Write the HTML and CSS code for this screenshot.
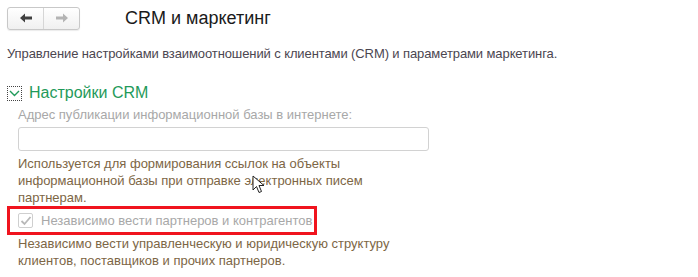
FILE: index.html
```html
<!DOCTYPE html>
<html lang="ru">
<head>
    <meta charset="UTF-8">
    <title>CRM и маркетинг</title>
    <link rel="stylesheet" href="styles.css">
</head>
<body>
    <header class="top-bar">
        <div class="nav-buttons">
            <button class="nav-btn">
                <svg width="14" height="10" viewBox="0 0 14 10"><path d="M1 5 L6 0.5 L6 3.5 L13 3.5 L13 6.5 L6 6.5 L6 9.5 Z" fill="#404040"/></svg>
            </button>
            <button class="nav-btn">
                <svg width="14" height="10" viewBox="0 0 14 10"><path d="M13 5 L8 0.5 L8 3.5 L1 3.5 L1 6.5 L8 6.5 L8 9.5 Z" fill="#b4b4b4"/></svg>
            </button>
        </div>
        <h1 class="page-title">CRM и маркетинг</h1>
    </header>

    <p class="page-desc">Управление настройками взаимоотношений с клиентами (CRM) и параметрами маркетинга.</p>

    <section class="group">
        <div class="group-head">
            <span class="group-toggle">
                <svg width="11" height="7" viewBox="0 0 11 7"><path d="M1 1 L5.5 5.5 L10 1" fill="none" stroke="#1f9a5a" stroke-width="1.4"/></svg>
            </span>
            <span class="group-title">Настройки CRM</span>
        </div>

        <div class="group-body">
            <label class="field-label">Адрес публикации информационной базы в интернете:</label>
            <input class="field-input" type="text" disabled>
            <p class="hint">Используется для формирования ссылок на объекты<br>информационной базы при отправке электронных писем<br>партнерам.</p>
        </div>

        <div class="highlight">
            <label class="check-row">
                <span class="check-box">
                    <svg width="12" height="10" viewBox="0 0 12 10"><path d="M1.5 5 L4.5 8 L10.5 1" fill="none" stroke="#b8b8b8" stroke-width="1.8"/></svg>
                </span>
                <span class="check-text">Независимо вести партнеров и контрагентов</span>
            </label>
        </div>
        <p class="hint hint-last">Независимо вести управленческую и юридическую структуру<br>клиентов, поставщиков и прочих партнеров.</p>
    </section>

    <svg class="cursor" width="14" height="20" viewBox="0 0 14 20">
        <path d="M1 1 L1 15 L4.5 11.5 L7 17.5 L9.5 16.5 L7 10.5 L12 10.5 Z" fill="#fff" stroke="#222" stroke-width="1"/>
    </svg>
</body>
</html>
```

FILE: styles.css
```css
body {
    font-family: "Liberation Sans", Arial, sans-serif;
    font-size: 13px;
    color: #4a4a4a;
    background-color: #fff;
    margin: 0;
    padding: 6px 0 0 7px;
    width: 691px;
    height: 271px;
    overflow: hidden;
    position: relative;
}

.top-bar {
    display: flex;
    align-items: center;
    height: 24px;
}

.nav-buttons {
    display: flex;
    width: 73px;
    height: 23px;
    border: 1px solid #c8c8c8;
    border-radius: 3px;
    box-sizing: border-box;
    background: linear-gradient(#ffffff, #f0f0f0);
    box-shadow: 0 1px 1px rgba(0, 0, 0, 0.08);
}

.nav-btn {
    flex: 1;
    border: none;
    background: transparent;
    padding: 0;
    display: flex;
    align-items: center;
    justify-content: center;
}

.nav-btn + .nav-btn {
    border-left: 1px solid #d6d6d6;
}

.page-title {
    font-size: 18px;
    font-weight: normal;
    color: #1a1a1a;
    margin: 0 0 0 45px;
}

.page-desc {
    margin: 16px 0 0 0;
    line-height: 16px;
    letter-spacing: -0.1px;
    color: #4b4650;
}

.group {
    margin-top: 22px;
}

.group-head {
    display: flex;
    align-items: center;
    height: 18px;
}

.group-toggle {
    width: 13px;
    height: 13px;
    border: 1px dotted #444;
    display: flex;
    align-items: center;
    justify-content: center;
    margin-right: 7px;
}

.group-title {
    font-size: 16px;
    color: #1f9a5a;
}

.group-body {
    padding-left: 11px;
}

.field-label {
    display: block;
    color: #a8a8a8;
    margin-top: 5px;
    line-height: 16px;
}

.field-input {
    display: block;
    width: 411px;
    height: 24px;
    box-sizing: border-box;
    border: 1px solid #d2d2d2;
    border-radius: 3px;
    background: #fff;
    margin-top: 4px;
}

.hint {
    color: #7d6645;
    line-height: 17px;
    margin: 4px 0 0 0;
}

.highlight {
    width: 310px;
    height: 29px;
    box-sizing: border-box;
    border: 3px solid #f0141e;
    margin-top: 0;
    display: flex;
    align-items: center;
    padding-left: 8px;
}

.check-row {
    display: flex;
    align-items: center;
}

.check-box {
    width: 13px;
    height: 13px;
    border: 1px solid #cfcfcf;
    border-radius: 2px;
    display: flex;
    align-items: center;
    justify-content: center;
    margin-right: 8px;
}

.check-text {
    color: #a8a8a8;
}

.hint-last {
    padding-left: 11px;
    margin-top: 0;
}

.cursor {
    position: absolute;
    left: 252px;
    top: 175px;
}
```
